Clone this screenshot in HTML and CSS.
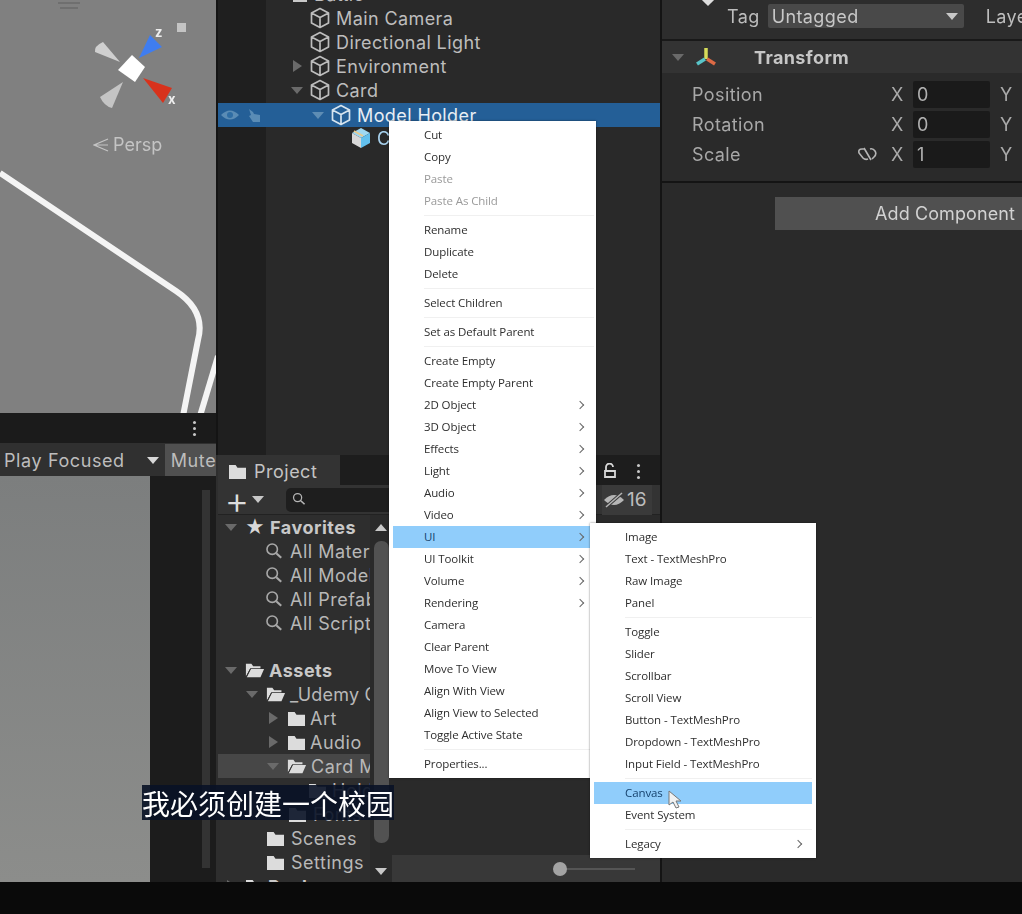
FILE: index.html
```html
<!DOCTYPE html>
<html lang="en">
<head>
    <meta charset="UTF-8">
    <meta name="viewport" content="width=device-width, initial-scale=1.0">
    <title>Unity Editor</title>
    <link rel="stylesheet" href="styles.css">
</head>
<body>
    <svg class="defs" width="0" height="0">
        <symbol id="cube" viewBox="0 0 20 22">
            <path d="M10 1.5 18.5 6v10L10 20.5 1.500 16V6zM1.500 6 10 10.500 18.500 6M10 10.500v10" fill="none" stroke="currentColor" stroke-width="1.700" stroke-linejoin="round"/>
        </symbol>
        <symbol id="folder" viewBox="0 0 20 18">
            <path d="M1 2h7l2 3h9v12H1z" fill="currentColor"/>
        </symbol>
        <symbol id="folder-open" viewBox="0 0 22 18">
            <path d="M1 16V2h6l2 3h8v2H6z" fill="currentColor"/>
            <path d="M6.500 8H21l-4 9H2z" fill="currentColor"/>
            <path d="M6 7.500 1.500 16.500" stroke="#333" stroke-width="1"/>
        </symbol>
        <symbol id="search" viewBox="0 0 20 20">
            <circle cx="8" cy="8" r="5.800" fill="none" stroke="currentColor" stroke-width="1.800"/>
            <path d="m12.500 12.500 5.500 5" stroke="currentColor" stroke-width="2.400"/>
        </symbol>
    </svg>

    <div class="app">
        <div class="editor">
            <div class="left">
                <div class="scene">
                    <svg class="scene-lines" viewBox="0 0 216 413" width="216" height="413">
                        <path d="M0 173 176 291Q206 311 198 340L183 416" fill="none" stroke="#f4f4f4" stroke-width="6"/>
                        <path d="M218 356 200 416" fill="none" stroke="#f4f4f4" stroke-width="6"/>
                        <path d="M58 3H80M60 8H78" stroke="#6a6a6a" stroke-width="1.500"/>
                    </svg>
                    <svg class="gizmo" viewBox="90 20 100 100" width="100" height="100">
                        <path d="M120 62 103 42Q94 46 95 52Z" fill="#cfcfcf"/>
                        <path d="M123 82 100 97Q104 106 112 108Z" fill="#c4c4c4"/>
                        <path d="M139 58 150 35 162 47Z" fill="#3f7df0"/>
                        <path d="M143 78 172 88 163 103Z" fill="#d8321c"/>
                        <path d="M132 55 145 67 135 82 118 70Z" fill="#fff"/>
                        <text class="gizmo-label" x="155" y="37">z</text>
                        <text class="gizmo-label" x="168" y="104">x</text>
                    </svg>
                    <span class="scene-dot"></span>
                    <div class="persp">
                        <svg viewBox="0 0 16 14" width="16" height="14"><path d="M15 1 1 7l14 6M15 7H1" fill="none" stroke="#c4c4c4" stroke-width="1.200"/></svg>
                        Persp
                    </div>
                </div>
                <div class="game-tabs"><span class="kebab"></span></div>
                <div class="game-bar">
                    <span class="game-play">Play Focused</span>
                    <i class="tri-down"></i>
                    <span class="game-mute">Mute</span>
                </div>
                <div class="game-body">
                    <div class="game-view"></div>
                    <div class="game-side"><span class="game-scroll"></span></div>
                </div>
            </div>

            <div class="middle">
                <div class="hierarchy">
                    <div class="h-list">
                        <div class="h-row d0"><i class="tri-down dim"></i><span class="h-scene-icon"></span><span>Battle</span></div>
                        <div class="h-row d1"><i class="slot"></i><svg class="cube"><use href="#cube"/></svg><span>Main Camera</span></div>
                        <div class="h-row d1"><i class="slot"></i><svg class="cube"><use href="#cube"/></svg><span>Directional Light</span></div>
                        <div class="h-row d1"><i class="tri-right dim"></i><svg class="cube"><use href="#cube"/></svg><span>Environment</span></div>
                        <div class="h-row d1"><i class="tri-down dim"></i><svg class="cube"><use href="#cube"/></svg><span>Card</span></div>
                        <div class="h-row d2 selected">
                            <div class="h-vis">
                                <svg viewBox="0 0 20 14" width="20" height="14"><path d="M1 7Q10-2 19 7 10 16 1 7Z" fill="#5a8cb5"/><circle cx="10" cy="7" r="3" fill="#2e6da4"/></svg>
                                <svg viewBox="0 0 16 16" width="16" height="16"><path d="M3 2l4 3 1 2 6 1v7H7L3 9l2-1z" fill="#5a8cb5"/></svg>
                            </div>
                            <i class="tri-down dim"></i><svg class="cube"><use href="#cube"/></svg><span>Model Holder</span>
                        </div>
                        <div class="h-row d3">
                            <svg class="mesh" viewBox="0 0 20 22" width="20" height="22">
                                <path d="M10 1 19 6 10 11 1 6Z" fill="#9fd8f2"/>
                                <path d="M1 6 10 11V21L1 16Z" fill="#d8d8d8"/>
                                <path d="M10 11 19 6V16L10 21Z" fill="#62c0ee"/>
                                <path d="M3 4 12 9" stroke="#e7c98e" stroke-width="2"/>
                            </svg>
                            <span class="h-child">Card</span>
                        </div>
                    </div>
                </div>

                <div class="project">
                    <div class="p-tabs">
                        <div class="p-tab"><svg class="fi"><use href="#folder"/></svg><span>Project</span></div>
                        <div class="p-tab-tools">
                            <svg viewBox="0 0 14 16" width="14" height="16"><path d="M3 7V4a3.500 3.500 0 0 1 7 0M2 8h10v6H2z" fill="none" stroke="#d8d8d8" stroke-width="1.800"/></svg>
                            <span class="kebab"></span>
                        </div>
                    </div>
                    <div class="p-toolbar">
                        <span class="p-plus">+</span><i class="tri-down"></i>
                        <div class="p-search"><svg class="p-search-icon"><use href="#search"/></svg></div>
                        <div class="p-hidden">
                            <svg viewBox="0 0 22 18" width="22" height="18"><path d="M1 9Q11-1 21 9 11 19 1 9Z" fill="#b5b5b5"/><path d="M3 16 19 2" stroke="#3a3a3a" stroke-width="3.500"/><path d="M3 16 19 2" stroke="#b5b5b5" stroke-width="1.500"/></svg>
                            <span>16</span>
                        </div>
                    </div>
                    <div class="p-body">
                        <div class="p-tree">
                            <div class="p-row head"><i class="tri-down dim"></i><span class="star">★</span><span>Favorites</span></div>
                            <div class="p-row fav"><svg class="se"><use href="#search"/></svg><span>All Materials</span></div>
                            <div class="p-row fav"><svg class="se"><use href="#search"/></svg><span>All Models</span></div>
                            <div class="p-row fav"><svg class="se"><use href="#search"/></svg><span>All Prefabs</span></div>
                            <div class="p-row fav"><svg class="se"><use href="#search"/></svg><span>All Scripts</span></div>
                            <div class="p-row head assets"><i class="tri-down dim"></i><svg class="fo"><use href="#folder-open"/></svg><span>Assets</span></div>
                            <div class="p-row l1"><i class="tri-down dim"></i><svg class="fo"><use href="#folder-open"/></svg><span class="tight">_Udemy Course</span></div>
                            <div class="p-row l2"><i class="tri-right dim"></i><svg class="fi"><use href="#folder"/></svg><span>Art</span></div>
                            <div class="p-row l2"><i class="tri-right dim"></i><svg class="fi"><use href="#folder"/></svg><span>Audio</span></div>
                            <div class="p-row l2 current"><i class="tri-down dim"></i><svg class="fo"><use href="#folder-open"/></svg><span>Card Model</span></div>
                            <div class="p-row l3"><svg class="fi"><use href="#folder"/></svg><span>Holder</span></div>
                            <div class="p-row l2b"><svg class="fi"><use href="#folder"/></svg><span>Fonts</span></div>
                            <div class="p-row l1b"><svg class="fi"><use href="#folder"/></svg><span>Scenes</span></div>
                            <div class="p-row l1b"><svg class="fi"><use href="#folder"/></svg><span>Settings</span></div>
                            <div class="p-row head"><i class="tri-right dim"></i><svg class="fi"><use href="#folder"/></svg><span>Packages</span></div>
                        </div>
                        <div class="p-scroll">
                            <i class="tri-up"></i>
                            <span class="p-thumb"></span>
                            <i class="tri-down"></i>
                        </div>
                        <div class="p-files">
                            <div class="p-files-bar"><span class="p-slider"></span></div>
                        </div>
                    </div>
                </div>
            </div>

            <div class="inspector">
                <span class="i-mark"></span>
                <div class="i-tag">
                    <span>Tag</span>
                    <div class="i-select"><span>Untagged</span><i class="tri-down"></i></div>
                    <span class="i-layer">Layer</span>
                </div>
                <div class="i-head">
                    <i class="tri-down dim"></i>
                    <svg viewBox="0 0 22 20" width="22" height="20">
                        <path d="M11 1v11" stroke="#d6dc5a" stroke-width="3.500"/>
                        <path d="M10 12 2 17" stroke="#58c4c8" stroke-width="3.500"/>
                        <path d="M12 12 20 17" stroke="#dd6a45" stroke-width="3.500"/>
                    </svg>
                    <span>Transform</span>
                </div>
                <div class="i-props">
                    <div class="i-prop"><span>Position</span><span class="i-axis">X</span><span class="i-field">0</span><span class="i-axis">Y</span></div>
                    <div class="i-prop"><span>Rotation</span><span class="i-axis">X</span><span class="i-field">0</span><span class="i-axis">Y</span></div>
                    <div class="i-prop">
                        <span>Scale</span>
                        <svg class="i-link" viewBox="0 0 20 16" width="20" height="16"><path d="M7 3H5Q1 3 2 7L6 12Q8 14 11 13M13 3Q16 2 18 5 20 8 17 11L15 13M7 2l7 12" fill="none" stroke="#b5b5b5" stroke-width="1.600"/></svg>
                        <span class="i-axis">X</span><span class="i-field">1</span><span class="i-axis">Y</span>
                    </div>
                </div>
                <div class="i-add"><div class="i-add-btn">Add Component</div></div>
            </div>
        </div>
        <div class="taskbar"></div>

        <div class="menu main-menu">
            <div class="item">Cut</div>
            <div class="item">Copy</div>
            <div class="item off">Paste</div>
            <div class="item off">Paste As Child</div>
            <div class="sep"></div>
            <div class="item">Rename</div>
            <div class="item">Duplicate</div>
            <div class="item">Delete</div>
            <div class="sep"></div>
            <div class="item">Select Children</div>
            <div class="sep"></div>
            <div class="item">Set as Default Parent</div>
            <div class="sep"></div>
            <div class="item">Create Empty</div>
            <div class="item">Create Empty Parent</div>
            <div class="item more">2D Object</div>
            <div class="item more">3D Object</div>
            <div class="item more">Effects</div>
            <div class="item more">Light</div>
            <div class="item more">Audio</div>
            <div class="item more">Video</div>
            <div class="item more hot">UI</div>
            <div class="item more">UI Toolkit</div>
            <div class="item more">Volume</div>
            <div class="item more">Rendering</div>
            <div class="item">Camera</div>
            <div class="item">Clear Parent</div>
            <div class="item">Move To View</div>
            <div class="item">Align With View</div>
            <div class="item">Align View to Selected</div>
            <div class="item">Toggle Active State</div>
            <div class="sep"></div>
            <div class="item">Properties...</div>
        </div>

        <div class="menu sub-menu">
            <div class="item">Image</div>
            <div class="item">Text - TextMeshPro</div>
            <div class="item">Raw Image</div>
            <div class="item">Panel</div>
            <div class="sep"></div>
            <div class="item">Toggle</div>
            <div class="item">Slider</div>
            <div class="item">Scrollbar</div>
            <div class="item">Scroll View</div>
            <div class="item">Button - TextMeshPro</div>
            <div class="item">Dropdown - TextMeshPro</div>
            <div class="item">Input Field - TextMeshPro</div>
            <div class="sep"></div>
            <div class="item hot">Canvas</div>
            <div class="item">Event System</div>
            <div class="sep"></div>
            <div class="item more">Legacy</div>
        </div>

        <svg class="cursor" viewBox="0 0 14 20" width="14" height="20"><path d="M1 1v14l4-3 3 6 3-1-3-6h5z" fill="#f2f2f2" stroke="#777" stroke-width="1"/></svg>
    </div>

    <div class="subtitle">我必须创建一个校园</div>
</body>
</html>
```

FILE: styles.css
```css
* {
    box-sizing: border-box;
}
body {
    margin: 0;
    width: 1022px;
    height: 914px;
    overflow: hidden;
    position: relative;
    background-color: #0a0a0a;
    font-family: Inter, "Noto Sans", sans-serif;
    color: #bdbdbd;
}
i {
    display: block;
    flex: none;
}
.defs {
    position: absolute;
}
.app {
    width: 1022px;
    height: 914px;
    display: flex;
    flex-direction: column;
    filter: blur(0.5px);
}
.editor {
    display: flex;
    height: 882px;
    overflow: hidden;
}
.taskbar {
    height: 32px;
    background-color: #0a0a0a;
}

/* little triangles */
.tri-down {
    width: 0;
    height: 0;
    border-left: 6px solid transparent;
    border-right: 6px solid transparent;
    border-top: 7px solid #c8c8c8;
}
.tri-up {
    width: 0;
    height: 0;
    border-left: 6px solid transparent;
    border-right: 6px solid transparent;
    border-bottom: 7px solid #c8c8c8;
}
.tri-right {
    width: 0;
    height: 0;
    border-top: 6px solid transparent;
    border-bottom: 6px solid transparent;
    border-left: 9px solid #c8c8c8;
    margin: 0 1px 0 2px;
}
.tri-down.dim {
    border-top-color: #6a6a6a;
}
.tri-right.dim {
    border-left-color: #6a6a6a;
}
.slot {
    width: 12px;
}
.kebab {
    display: block;
    width: 3px;
    height: 3px;
    border-radius: 50%;
    background-color: #c8c8c8;
    box-shadow: 0 -6px 0 #c8c8c8, 0 6px 0 #c8c8c8;
}

/* left column: scene and game view */
.left {
    width: 216px;
    flex: none;
    display: flex;
    flex-direction: column;
}
.scene {
    height: 413px;
    background-color: #808080;
    position: relative;
    overflow: hidden;
}
.scene-lines {
    position: absolute;
    left: 0;
    top: 0;
}
.gizmo {
    position: absolute;
    left: 90px;
    top: 20px;
    overflow: visible;
}
.gizmo-label {
    font-size: 13px;
    font-weight: 700;
    fill: #eee;
}
.scene-dot {
    position: absolute;
    left: 177px;
    top: 23px;
    width: 9px;
    height: 9px;
    background-color: #c4c4c4;
}
.persp {
    position: absolute;
    left: 93px;
    top: 134px;
    display: flex;
    align-items: center;
    gap: 4px;
    font-size: 18px;
    color: #c4c4c4;
}
.game-tabs {
    height: 30px;
    background-color: #1b1b1b;
    display: flex;
    align-items: center;
    justify-content: flex-end;
    padding-right: 20px;
}
.game-bar {
    height: 33px;
    background-color: #303030;
    display: flex;
    align-items: center;
    padding: 2px 0 0 4px;
    font-size: 18px;
    letter-spacing: 0.6px;
    white-space: nowrap;
    overflow: hidden;
}
.game-bar .tri-down {
    margin-left: 22px;
    border-top-color: #d8d8d8;
}
.game-mute {
    margin-left: 6px;
    padding: 6px 0 7px 6px;
    background-color: #505050;
    flex: 1;
}
.game-body {
    flex: 1;
    display: flex;
}
.game-view {
    width: 150px;
    background: linear-gradient(#7c7e7e, #8c8d8b);
}
.game-side {
    flex: 1;
    background-color: #1c1c1c;
    padding: 14px 6px 14px 52px;
    display: flex;
}
.game-scroll {
    flex: 1;
    background-color: #333;
}

/* middle column: hierarchy and project */
.middle {
    width: 446px;
    flex: none;
    display: flex;
    flex-direction: column;
    border-right: 2px solid #141414;
}
.hierarchy {
    height: 455px;
    overflow: hidden;
    background: linear-gradient(90deg, #141414 2px, #1f1f1f 2px, #1f1f1f 50px, #292929 50px);
    font-size: 18px;
    letter-spacing: 0.4px;
}
.h-list {
    margin-top: -18px;
}
.h-row {
    height: 24px;
    display: flex;
    align-items: center;
    white-space: nowrap;
    position: relative;
}
.cube {
    width: 20px;
    height: 22px;
    margin: 0 6px 0 7px;
    flex: none;
}
.d0 {
    padding-left: 58px;
}
.h-scene-icon {
    width: 14px;
    height: 16px;
    margin: 0 7px;
    background-color: #c8c8c8;
}
.d1 {
    padding-left: 75px;
}
.d2 {
    padding-left: 94px;
}
.d3 {
    padding-left: 135px;
}
.selected {
    margin: 1px 0 -1px 2px;
    background-color: #245f97;
    color: #e8eef4;
}
.selected .cube {
    color: #d6e4ef;
}
.selected .tri-down.dim {
    border-top-color: #5e8db4;
}
.h-vis {
    position: absolute;
    left: 2px;
    top: 4px;
    display: flex;
    gap: 6px;
    align-items: center;
}
.mesh {
    flex: none;
}
.h-child {
    margin-left: 6px;
    color: #a8d2ee;
}
.project {
    flex: 1;
    min-height: 0;
    display: flex;
    flex-direction: column;
    background-color: #2e2e2e;
    padding-left: 2px;
    font-size: 18px;
    letter-spacing: 0.5px;
}
.p-tabs {
    height: 30px;
    flex: none;
    display: flex;
    align-items: stretch;
    background-color: #1d1d1d;
}
.p-tab {
    width: 122px;
    background-color: #333;
    display: flex;
    align-items: center;
    gap: 7px;
    padding: 3px 0 0 10px;
    color: #c4c4c4;
}
.fi {
    width: 19px;
    height: 17px;
    flex: none;
    color: #dcdcdc;
}
.fo {
    width: 20px;
    height: 18px;
    flex: none;
    color: #dcdcdc;
}
.p-tab-tools {
    margin-left: auto;
    display: flex;
    align-items: center;
    gap: 20px;
    padding: 2px 20px 0 0;
}
.p-toolbar {
    height: 30px;
    flex: none;
    display: flex;
    align-items: center;
    background-color: #333;
    border-bottom: 1px solid #222;
}
.p-plus {
    width: 30px;
    margin-left: 4px;
    text-align: center;
    font-size: 38px;
    font-weight: 300;
    line-height: 30px;
    letter-spacing: 0;
    color: #ddd;
}
.p-search {
    margin-left: 22px;
    width: 286px;
    height: 24px;
    border-radius: 5px 0 0 5px;
    background-color: #1e1e1e;
    padding: 4px 6px;
}
.p-search-icon {
    width: 14px;
    height: 14px;
    display: block;
    color: #b5b5b5;
}
.p-hidden {
    margin-left: auto;
    width: 50px;
    height: 30px;
    display: flex;
    align-items: center;
    gap: 2px;
    padding-left: 1px;
    background-color: #3a3a3a;
    margin-right: 8px;
    font-size: 19px;
    letter-spacing: 0;
}
.p-body {
    flex: 1;
    min-height: 0;
    display: flex;
}
.p-tree {
    width: 152px;
    flex: none;
    overflow: hidden;
    white-space: nowrap;
}
.p-row {
    height: 24px;
    display: flex;
    align-items: center;
    color: #b8b8b8;
}
.p-row.head {
    padding-left: 7px;
    gap: 8px;
    font-weight: 700;
    color: #c8c8c8;
}
.star {
    font-size: 19px;
    font-weight: 400;
    line-height: 1;
    color: #d8d8d8;
    width: 17px;
}
.head .fo,
.head .fi,
.l1 .fo,
.l2 .fo,
.l2 .fi {
    margin-right: -4px;
}
.fav {
    padding-left: 47px;
    gap: 7px;
}
.se {
    width: 18px;
    height: 18px;
    flex: none;
    color: #a8a8a8;
}
.assets {
    margin-top: 23px;
}
.l1 {
    padding-left: 28px;
    gap: 8px;
}
.tight {
    letter-spacing: 0.2px;
}
.l2 {
    padding-left: 49px;
    gap: 8px;
}
.current {
    background-color: #474747;
}
.l3 {
    padding-left: 90px;
    gap: 5px;
}
.l2b {
    padding-left: 70px;
    gap: 6px;
}
.l1b {
    padding-left: 48px;
    gap: 6px;
}
.p-scroll {
    width: 22px;
    flex: none;
    padding-top: 9px;
    display: flex;
    flex-direction: column;
    align-items: center;
    background-color: #2a2a2a;
}
.p-thumb {
    flex: none;
    width: 15px;
    height: 302px;
    margin: 10px 0 25px;
    border-radius: 7px;
    background-color: #525252;
}
.p-files {
    flex: 1;
    display: flex;
    flex-direction: column;
    justify-content: flex-end;
    background-color: #2a2a2a;
}
.p-files-bar {
    height: 27px;
    background-color: #383838;
    display: flex;
    align-items: center;
    justify-content: flex-end;
    padding-right: 25px;
}
.p-slider {
    width: 75px;
    height: 2px;
    background-color: #555;
    position: relative;
}
.p-slider::before {
    content: "";
    position: absolute;
    left: -7px;
    top: -6px;
    width: 14px;
    height: 14px;
    border-radius: 50%;
    background-color: #a3a3a3;
}

/* right column: inspector */
.inspector {
    flex: 1;
    background-color: #2a2a2a;
    font-size: 18px;
    letter-spacing: 0.4px;
    white-space: nowrap;
    overflow: hidden;
    position: relative;
}
.i-mark {
    position: absolute;
    left: 41px;
    top: -6px;
    width: 10px;
    height: 10px;
    background-color: #ddd;
    transform: rotate(45deg);
}
.i-tag {
    height: 41px;
    padding: 3px 0 10px 65px;
    display: flex;
    align-items: center;
    gap: 8px;
    background-color: #2d2d2d;
    border-bottom: 2px solid #191919;
}
.i-select {
    width: 196px;
    height: 24px;
    padding: 0 6px 0 4px;
    flex: none;
    display: flex;
    align-items: center;
    justify-content: space-between;
    border-radius: 2px;
    background-color: #494949;
    color: #c8c8c8;
}
.i-layer {
    margin-left: 14px;
}
.i-head {
    height: 32px;
    display: flex;
    align-items: center;
    padding-left: 10px;
    background-color: #333;
    font-weight: 700;
    color: #c6c6c6;
}
.i-head svg {
    margin: 0 0 0 11px;
}
.i-head span {
    margin-left: 37px;
}
.i-props {
    padding: 6px 0 13px 30px;
    border-bottom: 2px solid #141414;
    height: 110px;
}
.i-prop {
    height: 30px;
    display: flex;
    align-items: center;
    color: #a8a8a8;
}
.i-prop > span:first-child {
    width: 199px;
    flex: none;
}
.i-link {
    margin-left: -34px;
    margin-right: 14px;
    flex: none;
}
.i-axis {
    width: 22px;
    flex: none;
    color: #aaa;
}
.i-field {
    width: 82px;
    height: 27px;
    margin-right: 10px;
    padding-left: 4px;
    display: flex;
    align-items: center;
    border-radius: 2px;
    background-color: #1a1a1a;
    color: #b0b0b0;
}
.i-add {
    padding: 14px 0 0 113px;
}
.i-add-btn {
    width: 260px;
    height: 33px;
    padding-left: 100px;
    display: flex;
    align-items: center;
    background-color: #505050;
    letter-spacing: 0.1px;
    color: #d2d2d2;
}

/* context menus */
.menu {
    position: absolute;
    background-color: #fff;
    font-family: "Open Sans", "Noto Sans", sans-serif;
    font-size: 11.5px;
    letter-spacing: -0.1px;
    color: #2e2e2e;
    box-shadow: 0 0 2px rgba(0, 0, 0, 0.5);
}
.main-menu {
    left: 389px;
    top: 121px;
    width: 207px;
    height: 657px;
    padding: 3px 2px 2px 4px;
}
.sub-menu {
    left: 590px;
    top: 523px;
    width: 226px;
    height: 335px;
    padding: 3px 4px 2px;
}
.item {
    height: 22px;
    line-height: 22px;
    padding-left: 31px;
    position: relative;
    white-space: nowrap;
}
.item.off {
    color: #9a9a9a;
}
.item.hot {
    background-color: #90cdfb;
    color: #16426d;
}
.item.more::after {
    content: "";
    position: absolute;
    right: 11px;
    top: 8px;
    width: 5px;
    height: 5px;
    border-top: 1px solid #666;
    border-right: 1px solid #666;
    transform: rotate(45deg);
}
.sep {
    height: 7px;
    padding-top: 3px;
}
.sep::before {
    content: "";
    display: block;
    height: 1px;
    margin-left: 31px;
    background-color: #f0f0f0;
}
.cursor {
    position: absolute;
    left: 668px;
    top: 790px;
}
.subtitle {
    position: absolute;
    left: 142px;
    top: 785px;
    width: 252px;
    height: 35px;
    overflow: hidden;
    background-color: rgba(9, 18, 38, 0.9);
    font-family: "Noto Sans CJK SC", sans-serif;
    font-size: 28px;
    line-height: 37px;
    color: #fff;
    white-space: nowrap;
}
```
